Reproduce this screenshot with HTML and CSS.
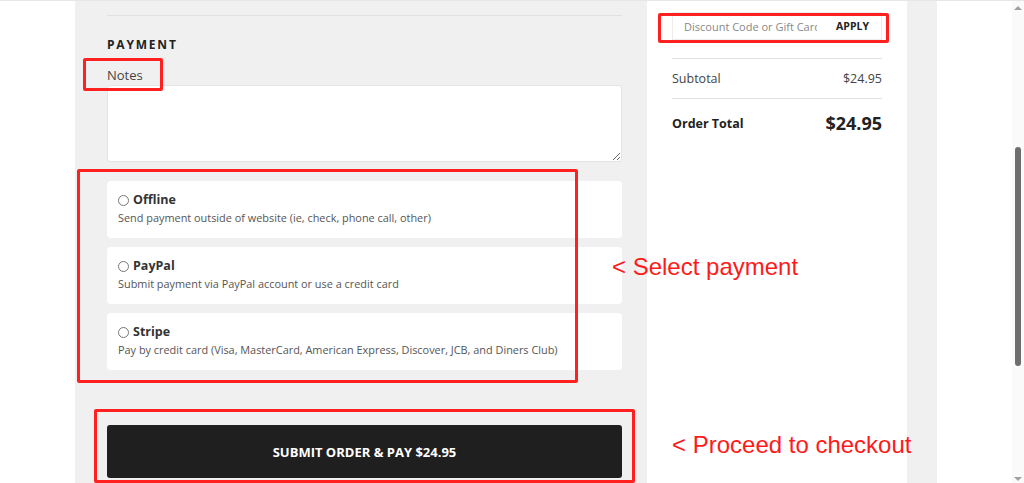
FILE: index.html
```html
<!DOCTYPE html>
<html>
<head>
<meta charset="utf-8">
<link rel="stylesheet" href="styles.css">
</head>
<body>
<div class="page">
  <div class="gutter-left"></div>
  <main class="main-col">
    <div class="rule"></div>
    <h2 class="section-title">PAYMENT</h2>
    <label class="notes-label">Notes</label>
    <textarea class="notes"></textarea>
    <div class="options">
      <div class="option">
        <div class="opt-title"><span class="radio"></span>Offline</div>
        <div class="opt-desc">Send payment outside of website (ie, check, phone call, other)</div>
      </div>
      <div class="option">
        <div class="opt-title"><span class="radio"></span>PayPal</div>
        <div class="opt-desc">Submit payment via PayPal account or use a credit card</div>
      </div>
      <div class="option">
        <div class="opt-title"><span class="radio"></span>Stripe</div>
        <div class="opt-desc">Pay by credit card (Visa, MasterCard, American Express, Discover, JCB, and Diners Club)</div>
      </div>
    </div>
    <button class="submit">SUBMIT ORDER &amp; PAY $24.95</button>
  </main>
  <aside class="summary">
    <div class="discount">
      <span class="discount-ph">Discount Code or Gift Card</span>
      <span class="apply">APPLY</span>
    </div>
    <div class="row sub">
      <span>Subtotal</span><span>$24.95</span>
    </div>
    <div class="row total">
      <span class="total-label">Order Total</span><span class="total-val">$24.95</span>
    </div>
  </aside>
  <div class="strip"></div>
  <div class="gutter-right"></div>
  <div class="scrollbar">
    <span class="arrow up"></span>
    <span class="thumb"></span>
    <span class="arrow down"></span>
  </div>

  <div class="mark mark-notes"></div>
  <div class="mark mark-discount"></div>
  <div class="mark mark-options"></div>
  <div class="mark mark-submit"></div>
  <div class="note note-select">&lt; Select payment</div>
  <div class="note note-proceed">&lt; Proceed to checkout</div>
</div>
</body>
</html>
```

FILE: styles.css
```css
html, body {
  margin: 0;
  padding: 0;
  background: #fff;
}
body {
  font-family: "Open Sans", "DejaVu Sans", sans-serif;
  color: #333;
}
.page {
  position: relative;
  display: flex;
  height: 483px;
  overflow: hidden;
  border-top: 1px solid #e6e6e6;
  box-sizing: border-box;
}
.gutter-left {
  width: 75px;
  flex: none;
}
.main-col {
  width: 572px;
  flex: none;
  background: #f0f0f0;
  box-sizing: border-box;
  padding: 14px 25px 0 32px;
  display: flex;
  flex-direction: column;
}
.rule {
  height: 1px;
  background: #e0e0e0;
}
.section-title {
  margin: 21px 0 0;
  font-size: 12px;
  font-weight: 700;
  letter-spacing: 1.8px;
  color: #222;
  line-height: 16px;
}
.notes-label {
  margin-top: 13px;
  font-size: 13px;
  color: #444;
  line-height: 18px;
}
.notes {
  margin-top: 1px;
  height: 77px;
  box-sizing: border-box;
  border: 1px solid #e4e4e4;
  border-radius: 3px;
  background: #fff;
  resize: vertical;
  font-family: inherit;
}
.options {
  margin-top: 19px;
  display: flex;
  flex-direction: column;
  gap: 9px;
}
.option {
  background: #fff;
  border-radius: 4px;
  height: 57px;
  box-sizing: border-box;
  padding: 10px 11px 0;
}
.opt-title {
  display: flex;
  align-items: center;
  font-size: 12.5px;
  font-weight: 700;
  color: #333;
  line-height: 18px;
}
.radio {
  width: 9px;
  height: 9px;
  border: 1px solid #777;
  border-radius: 50%;
  margin-right: 4px;
  box-sizing: content-box;
}
.opt-desc {
  margin-top: 1px;
  font-size: 10.9px;
  color: #555;
  line-height: 16px;
}
.submit {
  margin-top: 55px;
  height: 53px;
  border: none;
  border-radius: 3px;
  background: #1f1f1f;
  color: #fff;
  font-family: inherit;
  font-size: 13px;
  font-weight: 700;
}
.summary {
  width: 260px;
  flex: none;
  box-sizing: border-box;
  padding: 11px 25px 0;
  display: flex;
  flex-direction: column;
}
.discount {
  height: 28px;
  box-sizing: border-box;
  border: 1px solid #ececec;
  display: flex;
  align-items: center;
  justify-content: space-between;
  padding: 0 12px 0 11px;
}
.discount-ph {
  font-size: 11px;
  color: #888;
  width: 133px;
  overflow: hidden;
  white-space: nowrap;
}
.apply {
  font-size: 10.5px;
  font-weight: 700;
  color: #222;
}
.row {
  display: flex;
  justify-content: space-between;
  align-items: center;
  border-top: 1px solid #e2e2e2;
}
.sub {
  margin-top: 18px;
  height: 39px;
  font-size: 12.5px;
  color: #444;
}
.total {
  height: 48px;
}
.total-label {
  font-size: 12.5px;
  font-weight: 700;
  color: #222;
}
.total-val {
  font-size: 18px;
  font-weight: 700;
  color: #222;
}
.strip {
  width: 30px;
  flex: none;
  background: #f0f0f0;
}
.gutter-right {
  flex: 1;
}
.scrollbar {
  width: 12px;
  flex: none;
  background: #fafafa;
  position: relative;
}
.thumb {
  position: absolute;
  left: 3px;
  top: 146px;
  width: 6px;
  height: 219px;
  border-radius: 3px;
  background: #6e6e6e;
}
.arrow {
  position: absolute;
  left: 2px;
  width: 0;
  height: 0;
  border-left: 4px solid transparent;
  border-right: 4px solid transparent;
}
.arrow.up {
  top: 5px;
  border-bottom: 4px solid #a0a0a0;
}
.arrow.down {
  bottom: 2px;
  border-top: 4px solid #a0a0a0;
}
.mark {
  position: absolute;
  border: 3px solid #ff2020;
  border-radius: 2px;
  box-sizing: border-box;
}
.mark-notes { left: 83px; top: 57px; width: 80px; height: 33px; }
.mark-discount { left: 658px; top: 12px; width: 231px; height: 30px; }
.mark-options { left: 77px; top: 168px; width: 501px; height: 214px; }
.mark-submit { left: 94px; top: 408px; width: 541px; height: 74px; }
.note {
  position: absolute;
  font-family: "Liberation Sans", Arial, sans-serif;
  font-size: 24px;
  color: #ff1a1a;
  white-space: nowrap;
  line-height: 28px;
}
.note-select { left: 612px; top: 252px; }
.note-proceed { left: 672px; top: 430px; }
```
